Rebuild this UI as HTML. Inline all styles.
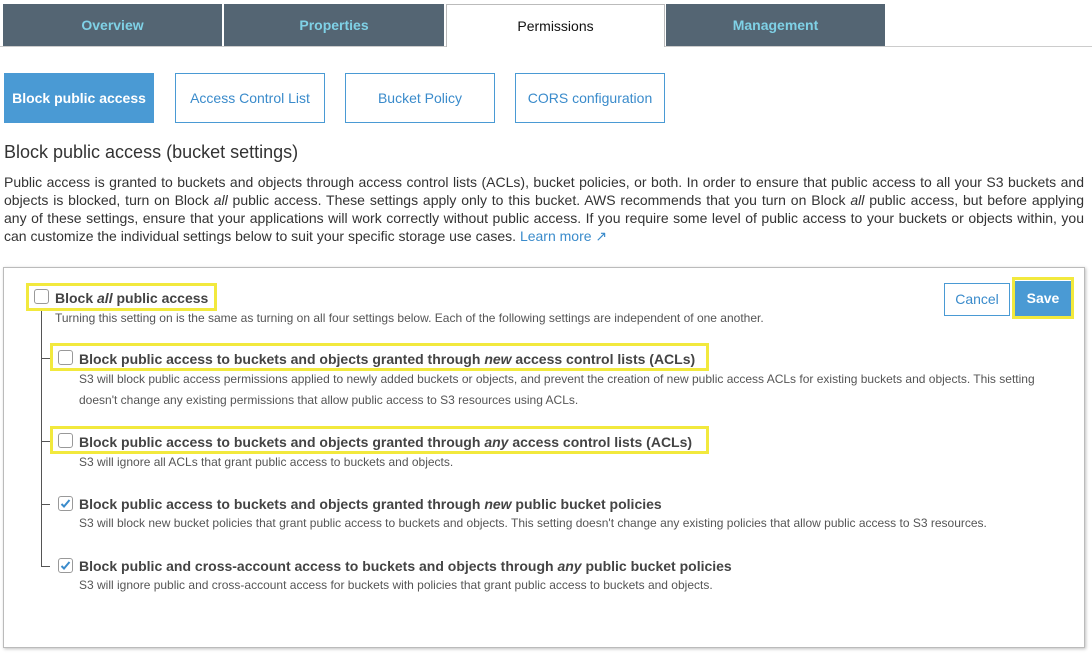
<!DOCTYPE html>
<html><head><style>
*{margin:0;padding:0;box-sizing:border-box}
body{width:1092px;height:658px;background:#fff;font-family:"Liberation Sans",Arial,sans-serif;position:relative;overflow:hidden;color:#333}
.a{position:absolute}
.tab{position:absolute;top:4px;height:42px;background:#546573;color:#7fd1e6;font-weight:bold;font-size:14px;text-align:center;line-height:42px}
.sub{position:absolute;top:73px;height:50px;width:150px;border:1px solid #4a9ad4;color:#3a8bcb;font-size:14px;text-align:center;line-height:48px}
.cb{position:absolute;width:15px;height:15px;border:1px solid #999;border-radius:3px;background:#fff}
.hl{position:absolute;border:3px solid #f2e93d}
.t{position:absolute;font-size:14px;font-weight:bold;color:#444;white-space:nowrap}
.d{position:absolute;font-size:12px;color:#555;white-space:nowrap;line-height:21px}
.ln{position:absolute;background:#555}
.p div{text-align:justify;text-align-last:justify;height:18px}
</style></head><body>
<div class="a" style="left:0;top:46px;width:1092px;height:1px;background:#ccc"></div>
<div class="tab" style="left:3px;width:219px">Overview</div>
<div class="tab" style="left:224px;width:220px">Properties</div>
<div class="a" style="left:446px;top:4px;width:219px;height:43px;background:#fff;border:1px solid #bbb;border-bottom:none;text-align:center;line-height:42px;font-size:14px;color:#111">Permissions</div>
<div class="tab" style="left:666px;width:219px">Management</div>

<div class="sub" style="left:4px;background:#4a9ad4;color:#fff;font-weight:bold">Block public access</div>
<div class="sub" style="left:175px">Access Control List</div>
<div class="sub" style="left:345px">Bucket Policy</div>
<div class="sub" style="left:515px">CORS configuration</div>

<div class="a" style="left:4px;top:142px;font-size:18px;color:#333">Block public access (bucket settings)</div>
<div class="a p" style="left:4px;top:173px;width:1080px;font-size:14px;line-height:18px;color:#333">
<div>Public access is granted to buckets and objects through access control lists (ACLs), bucket policies, or both. In order to ensure that public access to all your S3 buckets and</div>
<div>objects is blocked, turn on Block <i>all</i> public access. These settings apply only to this bucket. AWS recommends that you turn on Block <i>all</i> public access, but before applying</div>
<div>any of these settings, ensure that your applications will work correctly without public access. If you require some level of public access to your buckets or objects within, you</div>
<div style="text-align-last:left">can customize the individual settings below to suit your specific storage use cases. <span style="color:#3a8bcb">Learn more &#x2197;</span></div>
</div>

<div class="a" style="left:3px;top:267px;width:1082px;height:381px;border:1px solid #bbb;box-shadow:1px 1px 3px rgba(0,0,0,.25)"></div>

<div class="a" style="left:944px;top:283px;width:66px;height:33px;border:1px solid #4a9ad4;color:#3a8bcb;font-size:14px;text-align:center;line-height:31px">Cancel</div>
<div class="a" style="left:1012px;top:277px;width:62px;height:42px;border:3px solid #f2e93d"></div>
<div class="a" style="left:1015px;top:281px;width:56px;height:35px;background:#4a9ad4;color:#fff;font-weight:bold;font-size:14px;text-align:center;line-height:35px">Save</div>

<div class="ln" style="left:41px;top:308px;width:1px;height:259px"></div>
<div class="ln" style="left:41px;top:358px;width:9px;height:1px"></div>
<div class="ln" style="left:41px;top:441px;width:9px;height:1px"></div>
<div class="ln" style="left:41px;top:504px;width:9px;height:1px"></div>
<div class="ln" style="left:41px;top:566px;width:9px;height:1px"></div>

<div class="hl" style="left:26px;top:283px;width:191px;height:28px"></div>
<div class="cb" style="left:34px;top:289px"></div>
<div class="t" style="left:55px;top:290px">Block <i>all</i> public access</div>
<div class="d" style="left:55px;top:308px">Turning this setting on is the same as turning on all four settings below. Each of the following settings are independent of one another.</div>

<div class="hl" style="left:50px;top:343px;width:659px;height:28px"></div>
<div class="cb" style="left:58px;top:350px"></div>
<div class="t" style="left:79px;top:351px">Block public access to buckets and objects granted through <i>new</i> access control lists (ACLs)</div>
<div class="d" style="left:79px;top:369px">S3 will block public access permissions applied to newly added buckets or objects, and prevent the creation of new public access ACLs for existing buckets and objects. This setting<br>doesn't change any existing permissions that allow public access to S3 resources using ACLs.</div>

<div class="hl" style="left:50px;top:426px;width:659px;height:28px"></div>
<div class="cb" style="left:58px;top:433px"></div>
<div class="t" style="left:79px;top:434px">Block public access to buckets and objects granted through <i>any</i> access control lists (ACLs)</div>
<div class="d" style="left:79px;top:452px">S3 will ignore all ACLs that grant public access to buckets and objects.</div>

<div class="cb" style="left:58px;top:496px"><svg width="13" height="13" viewBox="0 0 13 13"><path d="M2.5 7 L5 9.5 L10.5 3" stroke="#3a8bcb" stroke-width="2" fill="none"/></svg></div>
<div class="t" style="left:79px;top:496px">Block public access to buckets and objects granted through <i>new</i> public bucket policies</div>
<div class="d" style="left:79px;top:513px">S3 will block new bucket policies that grant public access to buckets and objects. This setting doesn't change any existing policies that allow public access to S3 resources.</div>

<div class="cb" style="left:58px;top:558px"><svg width="13" height="13" viewBox="0 0 13 13"><path d="M2.5 7 L5 9.5 L10.5 3" stroke="#3a8bcb" stroke-width="2" fill="none"/></svg></div>
<div class="t" style="left:79px;top:558px">Block public and cross-account access to buckets and objects through <i>any</i> public bucket policies</div>
<div class="d" style="left:79px;top:575px">S3 will ignore public and cross-account access for buckets with policies that grant public access to buckets and objects.</div>
</body></html>
